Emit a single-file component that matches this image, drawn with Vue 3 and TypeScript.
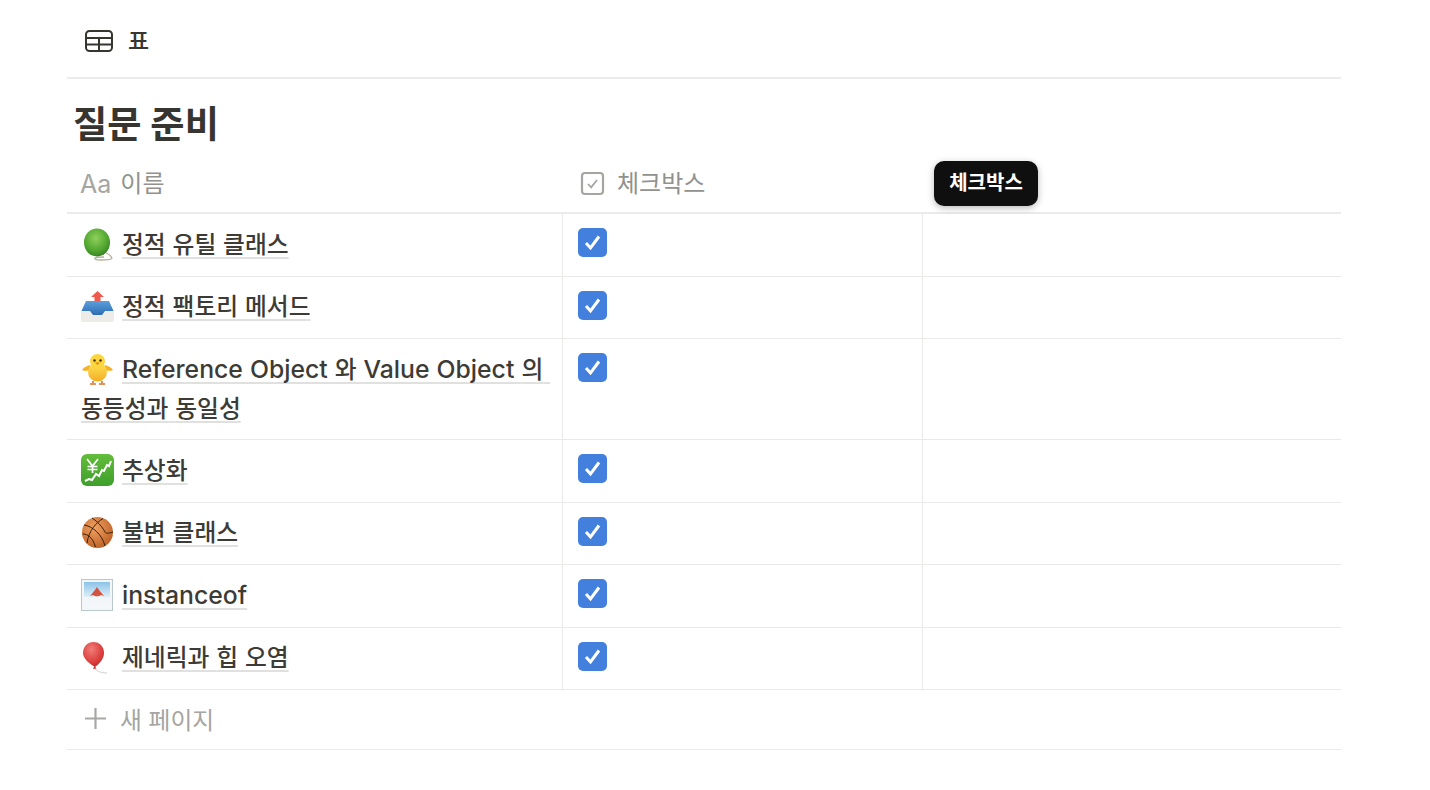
<script setup lang="ts">
interface Row { icon: string; title: string }
interface Segment { text: string; latin: boolean }
const rows: Row[] = [
  { icon: 'yoyo', title: '정적 유틸 클래스' },
  { icon: 'inbox', title: '정적 팩토리 메서드' },
  { icon: 'chick', title: 'Reference Object 와 Value Object 의 동등성과 동일성' },
  { icon: 'chart', title: '추상화' },
  { icon: 'ball', title: '불변 클래스' },
  { icon: 'picture', title: 'instanceof' },
  { icon: 'balloon', title: '제네릭과 힙 오염' }
]
function segments(title: string): Segment[] {
  const words = title.match(/\S+\s*/g) ?? []
  return words.map((text) => ({ text, latin: /^[A-Za-z]/.test(text) }))
}
</script>

<template>
  <main class="page">
    <nav class="tabs">
      <svg class="table-icon" width="28" height="22" viewBox="0 0 28 22" fill="none" stroke="#37352f" stroke-width="2">
        <rect x="1" y="1" width="26" height="20" rx="3.5" />
        <path d="M1 8h26M1 14.500h26M14 8v13" />
      </svg>
      <span class="tab-label">표</span>
    </nav>
    <h1 class="title">질문 준비</h1>
    <section class="table">
      <div class="head">
        <div class="hcell name-h">
          <span class="aa">Aa</span>
          <span>이름</span>
        </div>
        <div class="hcell check-h">
          <svg width="25" height="25" viewBox="0 0 25 25" fill="none">
            <rect x="2" y="2" width="21" height="21" rx="3" stroke="#a5a5a2" stroke-width="2.2" />
            <path d="M8 13l3.2 3.4L17 9" stroke="#a5a5a2" stroke-width="1.8" />
          </svg>
          <span>체크박스</span>
        </div>
        <div class="hcell"></div>
        <div class="tooltip">체크박스</div>
      </div>
      <div v-for="row in rows" :key="row.icon" class="row">
        <div class="cell name">
          <svg class="emoji" viewBox="0 0 33 33">
            <template v-if="row.icon === 'yoyo'">
              <defs>
                <radialGradient id="yy" cx="0.45" cy="0.35" r="0.7">
                  <stop offset="0" stop-color="#8fd05c" />
                  <stop offset="0.65" stop-color="#4fa52e" />
                  <stop offset="1" stop-color="#357a22" />
                </radialGradient>
              </defs>
              <path d="M25 25c3 1 5 3 6 5 0 2-6 2-11 2s-7-1-6-2 5-1 9-1" fill="none" stroke="#b9b09c" stroke-width="1.300" />
              <ellipse cx="16" cy="14.500" rx="13" ry="14" fill="url(#yy)" />
            </template>
            <template v-else-if="row.icon === 'inbox'">
              <defs>
                <linearGradient id="ib" x1="0" y1="0" x2="0" y2="1">
                  <stop offset="0" stop-color="#5d9fdc" />
                  <stop offset="1" stop-color="#2a69b0" />
                </linearGradient>
              </defs>
              <path d="M16.500 1l6.500 6h-3.500v6h-6V7H10z" fill="#ee5b4d" />
              <path d="M5 11h23l5 11v4H0v-4z" fill="url(#ib)" />
              <path d="M0 21h9l3 4h9l3-4h9v9a2 2 0 0 1-2 2H2a2 2 0 0 1-2-2z" fill="#eeece8" />
            </template>
            <template v-else-if="row.icon === 'chick'">
              <defs>
                <linearGradient id="ck" x1="0" y1="0" x2="0" y2="1">
                  <stop offset="0" stop-color="#fde25a" />
                  <stop offset="1" stop-color="#f4ae22" />
                </linearGradient>
              </defs>
              <path d="M9 12C5 13 2 15 1 17c3 1.500 7 1 9-1zM24 12c4 1 7 3 8 5-3 1.500-7 1-9-1z" fill="#f5b324" />
              <ellipse cx="16.500" cy="19" rx="9.500" ry="9.500" fill="url(#ck)" />
              <circle cx="16.500" cy="8.500" r="7.500" fill="#fcd63f" />
              <circle cx="13.500" cy="7.500" r="1.200" fill="#3b2a14" />
              <circle cx="19.500" cy="7.500" r="1.200" fill="#3b2a14" />
              <path d="M14 9.500h5l-2.500 2.500z" fill="#ef7d22" />
              <path d="M12 28v2M9 31h6M21 28v2M18 31h6" stroke="#d9702a" stroke-width="1.600" fill="none" />
            </template>
            <template v-else-if="row.icon === 'chart'">
              <defs>
                <linearGradient id="ch" x1="0" y1="0" x2="0" y2="1">
                  <stop offset="0" stop-color="#62bd3a" />
                  <stop offset="1" stop-color="#3f9f2c" />
                </linearGradient>
              </defs>
              <rect x="0" y="0" width="33" height="32" rx="6" fill="url(#ch)" />
              <path d="M6 5l5.500 7L17 5M11.500 12v7M6.500 12.500h10M6.500 15.500h10" stroke="#fff" stroke-width="1.700" fill="none" />
              <path d="M4 27l4-2 3 1 4-6 3 2 3-6 2 1 3-6 2 1 2-5" stroke="#fff" stroke-width="2" fill="none" />
            </template>
            <template v-else-if="row.icon === 'ball'">
              <defs>
                <radialGradient id="bb" cx="0.4" cy="0.35" r="0.75">
                  <stop offset="0" stop-color="#f1a163" />
                  <stop offset="1" stop-color="#b95b1f" />
                </radialGradient>
              </defs>
              <circle cx="16.500" cy="16.500" r="15.500" fill="url(#bb)" />
              <path d="M3 9c8 1 18 9 21 21M11 2c8 5 12 12 13 14s5 1 8 0M1.500 18c5 0 10 3 13 13M22 2.500C15 7 8 14 6 27" fill="none" stroke="#33200f" stroke-width="1" />
            </template>
            <template v-else-if="row.icon === 'picture'">
              <defs>
                <linearGradient id="sky" x1="0" y1="0" x2="0" y2="1">
                  <stop offset="0" stop-color="#8cc3e8" />
                  <stop offset="0.55" stop-color="#dcedf6" />
                  <stop offset="1" stop-color="#f4f7f8" />
                </linearGradient>
              </defs>
              <rect x="0.500" y="0.500" width="31" height="31" fill="#f3f6f7" stroke="#b8c8cd" />
              <rect x="3" y="3" width="26" height="26" fill="url(#sky)" />
              <path d="M9 17l5-6 2-3 2 3 5 6-3-1-4 2-4-2z" fill="#d2523f" />
              <path d="M3 18c4-1 6 1 9 0s6-1 9 0 5 0 8 0v11H3z" fill="#f3f6f8" opacity="0.92" />
            </template>
            <template v-else>
              <defs>
                <radialGradient id="bl" cx="0.4" cy="0.3" r="0.75">
                  <stop offset="0" stop-color="#ef7d78" />
                  <stop offset="0.7" stop-color="#dc3d3b" />
                  <stop offset="1" stop-color="#b8282b" />
                </radialGradient>
              </defs>
              <path d="M12.500 1c6 0 10.500 4.500 10.500 11 0 6-5 11-9 14-5-3-12-8-12-14C2 5.500 6.500 1 12.500 1z" fill="url(#bl)" />
              <path d="M13.500 25l2 2.500-3.500 .5z" fill="#c93334" />
              <path d="M14 28c2 2 6 4 12 4" fill="none" stroke="#d4d0cd" stroke-width="1" />
            </template>
          </svg>
          <span class="link"><span v-for="(seg, i) in segments(row.title)" :key="i" :class="{ latin: seg.latin }">{{ seg.text }}</span></span>
        </div>
        <div class="cell check">
          <svg width="29" height="29" viewBox="0 0 29 29">
            <rect width="29" height="29" rx="5" fill="#4380de" />
            <path d="M8 15l4.500 5L21 8.500" fill="none" stroke="#fff" stroke-width="3" />
          </svg>
        </div>
        <div class="cell"></div>
      </div>
      <div class="new-page">
        <svg width="21" height="21" viewBox="0 0 21 21" stroke="#a8a8a5" stroke-width="2.200">
          <path d="M10.500 0v21M0 10.500h21" />
        </svg>
        <span>새 페이지</span>
      </div>
    </section>
  </main>
</template>

<style scoped>
.page {
  box-sizing: border-box;
  width: 1430px;
  height: 790px;
  padding: 0 89px 0 67px;
  background: #fff;
  color: #37352f;
  font-family: Inter, "Noto Sans CJK KR", sans-serif;
  overflow: hidden;
}
.tabs {
  box-sizing: border-box;
  height: 79px;
  display: flex;
  align-items: center;
  gap: 15px;
  padding: 5px 0 0 18px;
  border-bottom: 2px solid #ebebea;
}
.table-icon { flex: none; }
.tab-label { font-size: 23px; font-weight: 500; line-height: 30px; }
.title {
  margin: 0;
  height: 80px;
  padding: 0 0 0 6px;
  font-size: 37.25px;
  font-weight: 700;
  line-height: 92px;
}
.head {
  position: relative;
  box-sizing: border-box;
  height: 55px;
  display: grid;
  grid-template-columns: 496px 360px 1fr;
  border-bottom: 2px solid #ebebea;
  font-size: 24px;
  color: #91918e;
}
.hcell {
  display: flex;
  align-items: center;
  padding-bottom: 4px;
  line-height: 30px;
}
.name-h { padding-left: 13px; gap: 9px; }
.aa { font-size: 25px; color: #a5a5a2; }
.check-h { padding-left: 17px; gap: 12px; }
.tooltip {
  position: absolute;
  left: 867px;
  top: 2px;
  box-sizing: border-box;
  width: 104px;
  height: 45px;
  border-radius: 10px;
  background: #0f0f0f;
  color: #fff;
  font-size: 20px;
  font-weight: 600;
  line-height: 44px;
  text-align: center;
  box-shadow: 0 2px 7px rgba(0, 0, 0, 0.28);
}
.row {
  display: grid;
  grid-template-columns: 496px 360px 1fr;
  border-bottom: 1px solid #e9e9e8;
}
.cell {
  box-sizing: border-box;
  min-height: 61.5px;
  border-right: 1px solid #e9e9e8;
}
.cell:last-child { border-right: 0; }
.name {
  padding: 10.5px 12px 10.5px 14px;
  font-size: 23.75px;
  font-weight: 500;
  line-height: 39.5px;
  white-space: pre-wrap;
  word-spacing: 0.5px;
  color: #3d3b36;
}
.emoji {
  width: 33px;
  height: 33px;
  margin-right: 8px;
  vertical-align: -8px;
}
.link {
  text-decoration: underline 2px #e0e0df;
  text-decoration-skip-ink: none;
  text-underline-offset: 4px;
}
.latin { font-size: 24.75px; }
.check { padding: 14.4px 0 0 15px; }
.check svg { display: block; }
.new-page {
  box-sizing: border-box;
  height: 60px;
  display: flex;
  align-items: center;
  gap: 14px;
  padding: 0 0 2px 18px;
  border-bottom: 1px solid #e9e9e8;
  font-size: 23.75px;
  color: #a5a5a2;
}
</style>
